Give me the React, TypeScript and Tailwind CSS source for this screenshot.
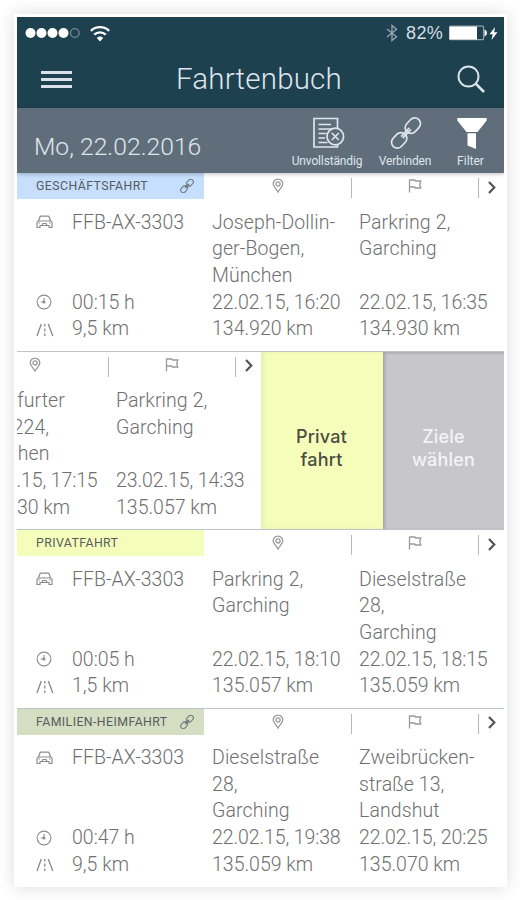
import clsx from "clsx";

type Trip = {
  tag: string;
  tagClass: string;
  linked?: boolean;
  plate: string;
  duration: string;
  distance: string;
  from: string[];
  fromTime: string;
  fromKm: string;
  to: string[];
  toTime: string;
  toKm: string;
  swiped?: boolean;
};

const trips: Trip[] = [
  {
    tag: "GESCHÄFTSFAHRT",
    tagClass: "bg-[#c5dffc]",
    linked: true,
    plate: "FFB-AX-3303",
    duration: "00:15 h",
    distance: "9,5 km",
    from: ["Joseph-Dollin-", "ger-Bogen,", "München"],
    fromTime: "22.02.15, 16:20",
    fromKm: "134.920 km",
    to: ["Parkring 2,", "Garching"],
    toTime: "22.02.15, 16:35",
    toKm: "134.930 km",
  },
  {
    tag: "",
    tagClass: "bg-white",
    plate: "",
    duration: "",
    distance: "",
    from: ["Frankfurter", "Ring 224,", "München"],
    fromTime: "22.02.15, 17:15",
    fromKm: "134.930 km",
    to: ["Parkring 2,", "Garching"],
    toTime: "23.02.15, 14:33",
    toKm: "135.057 km",
    swiped: true,
  },
  {
    tag: "PRIVATFAHRT",
    tagClass: "bg-[#f5fdba]",
    plate: "FFB-AX-3303",
    duration: "00:05 h",
    distance: "1,5 km",
    from: ["Parkring 2,", "Garching"],
    fromTime: "22.02.15, 18:10",
    fromKm: "135.057 km",
    to: ["Dieselstraße", "28,", "Garching"],
    toTime: "22.02.15, 18:15",
    toKm: "135.059 km",
  },
  {
    tag: "FAMILIEN-HEIMFAHRT",
    tagClass: "bg-[#d5dec3]",
    linked: true,
    plate: "FFB-AX-3303",
    duration: "00:47 h",
    distance: "9,5 km",
    from: ["Dieselstraße", "28,", "Garching"],
    fromTime: "22.02.15, 19:38",
    fromKm: "135.059 km",
    to: ["Zweibrücken-", "straße 13,", "Landshut"],
    toTime: "22.02.15, 20:25",
    toKm: "135.070 km",
  },
];

const LinkIcon = ({ className }: { className?: string }) => (
  <svg viewBox="0 0 32 32" fill="none" stroke="currentColor" className={className}>
    <g transform="rotate(-47 16 16)">
      <rect x="-2.5" y="10.2" width="17" height="11.6" rx="5.8" />
      <rect x="17.5" y="10.2" width="17" height="11.6" rx="5.8" />
      <path d="M10 14.900h12M10 17.100h12" />
    </g>
  </svg>
);

const PinIcon = () => (
  <svg width="12" height="16" viewBox="0 0 12 16" fill="none" stroke="#999" strokeWidth="1.3">
    <path d="M6 14C4.800 11.300 1.200 8.700 1.200 5.900a4.800 4.800 0 0 1 9.600 0c0 2.800-3.600 5.400-4.800 8.100z" />
    <circle cx="6" cy="5.900" r="2.100" />
  </svg>
);

const FlagIcon = () => (
  <svg width="14" height="15" viewBox="0 0 14 15" fill="none" stroke="#999" strokeWidth="1.3">
    <path d="M1.500 14.500V1.500M1.500 2h5.300l.8 1h5.200l-1.100 3.500 1.100 3.500H7.300l-.8-1h-5" />
  </svg>
);

const CarIcon = () => (
  <svg width="17" height="14" viewBox="0 0 17 14" fill="none" stroke="#8c8c8c" strokeWidth="1.2">
    <path d="M2.500 6 4 1.800Q4.200 1.100 5 1.100h7q.8 0 1 .7L14.500 6M2.500 6h12q1.500.3 1.500 2v4.500h-3v-2H4v2H1V8Q1 6.300 2.500 6zM6 10.500 6.800 8.500h3.400l.8 2M2.500 8h1.500M13 8h1.500" />
  </svg>
);

const ClockIcon = () => (
  <svg width="16" height="16" viewBox="0 0 16 16" fill="none" stroke="#8c8c8c" strokeWidth="1.1">
    <circle cx="8" cy="8" r="6.900" />
    <path d="M8 4v4H4.800" />
    <circle cx="8" cy="8" r="1" fill="#8c8c8c" />
  </svg>
);

const RoadIcon = () => (
  <svg width="18" height="14" viewBox="0 0 18 14" fill="none" stroke="#888" strokeWidth="1.3">
    <path d="M5.300 1 1 13M12.300 1l4.500 12" />
    <path d="M8.800 1v2.500M8.800 5.500v3M8.800 10.500V13" />
  </svg>
);

const StatusBar = () => (
  <div className="flex h-8 items-center justify-between pl-[8px] pr-[6px] text-white">
    <div className="flex items-center">
      <svg width="56" height="12" viewBox="0 0 56 12" fill="currentColor">
        <circle cx="5.500" cy="6" r="5" />
        <circle cx="16.500" cy="6" r="5" />
        <circle cx="27.500" cy="6" r="5" />
        <circle cx="38.500" cy="6" r="5" />
        <circle cx="49.800" cy="6" r="4.300" fill="none" stroke="#71899a" strokeWidth="1.300" />
      </svg>
      <svg width="20" height="17" viewBox="0 0 20 17" fill="none" stroke="currentColor" strokeWidth="2.400" className="ml-[9px]">
        <path d="M.9 5.800a13.200 13.200 0 0 1 18.200 0" />
        <path d="M4.200 9.700a8.400 8.400 0 0 1 11.600 0" />
        <path d="M10 16.500 6.800 13a4.700 4.700 0 0 1 6.400 0z" fill="currentColor" stroke="none" />
      </svg>
    </div>
    <div className="flex items-center">
      <svg width="12" height="18" viewBox="0 0 12 18" fill="none" stroke="#8fa3b0" strokeWidth="1.400">
        <path d="M1 5l9.500 7.800L6 16.500v-15l4.500 3.700L1 13" />
      </svg>
      <span className="ml-[8px] w-[39px] whitespace-nowrap font-['Liberation_Sans'] text-[18px] leading-none tracking-[0.4px] text-[#d5dde2]">82%</span>
      <svg width="40" height="16" viewBox="0 0 40 16" className="ml-[3px]">
        <rect x="1.600" y="1.200" width="34" height="13.500" rx="1" fill="none" stroke="#8fa3ad" strokeWidth="1.200" />
        <rect x="1.500" y="1.500" width="27.500" height="13" fill="#fff" />
        <path d="M36.500 4.500q2.500.8 2.500 3.500t-2.500 3.500z" fill="#fff" />
      </svg>
      <svg width="9" height="13" viewBox="0 0 9 13" fill="#fff" className="ml-[1px]">
        <path d="M6 0 .5 7.200h3.200L2.500 13 8.500 5.300H5.200z" />
      </svg>
    </div>
  </div>
);

const AppBar = () => (
  <div className="flex h-[59px] items-center pl-6 pr-[19px]">
    <div className="mt-px flex w-[31px] flex-col gap-1">
      <span className="h-[3px] bg-[#dbe1ea]" />
      <span className="h-[3px] bg-[#dbe1ea]" />
      <span className="h-[3px] bg-[#dbe1ea]" />
    </div>
    <h1 className="ml-[104px] mt-[2px] flex-1 whitespace-nowrap text-[29.5px] font-light leading-none tracking-[0.2px] text-[#dfe5ec]">
      Fahrtenbuch
    </h1>
    <svg width="28" height="28" viewBox="0 0 28 28" fill="none" stroke="#dfe5ec" strokeWidth="1.900">
      <circle cx="11.500" cy="11.500" r="10" />
      <path d="m18.700 18.700 8.300 8.300" strokeWidth="2.600" />
    </svg>
  </div>
);

const Toolbar = () => (
  <div className="relative z-10 flex h-[65px] bg-[#606e7b] pl-[17px] text-[#dfe5ec] shadow-[0_1px_4px_rgba(0,0,0,0.25)]">
    <div className="w-[253px] whitespace-nowrap pt-[25px] text-[24.7px] font-light leading-[28px]">Mo, 22.02.2016</div>
    <div className="flex w-[80px] flex-col items-center">
      <svg width="33" height="32" viewBox="0 0 33 32" fill="none" stroke="currentColor" strokeWidth="1.700" className="ml-[2px] mt-[9px]">
        <path d="M25.500 11V1.500H2v28.500h23.500v-2" />
        <path d="M6.500 7.500h12.500M6.500 12h14M6.500 16.500h8M6.500 21h6.500M6.500 25.500h9" strokeWidth="1.500" />
        <circle cx="23.300" cy="19.500" r="8.300" />
        <path d="m19.800 16 7 7M26.800 16l-7 7" />
      </svg>
      <span className="mt-[5px] whitespace-nowrap text-[12px] leading-[14px] tracking-[-0.15px]">Unvollständig</span>
    </div>
    <div className="flex w-[76px] flex-col items-center">
      <LinkIcon className="ml-[2px] mt-[9px] h-[32px] w-[32px] stroke-[1.700]" />
      <span className="mt-[5px] text-[12px] leading-[14px] tracking-[-0.15px]">Verbinden</span>
    </div>
    <div className="flex w-[54px] flex-col items-center">
      <svg width="30" height="32" viewBox="0 0 30 32" fill="#fff" className="ml-[3px] mt-[10px]">
        <path d="M.3 0h29.400v2.500L20.500 14h-11L.3 2.500zM10.500 15.200h8.500V31l-8.500-3.500z" />
      </svg>
      <span className="ml-px mt-[4px] text-[12px] leading-[14px]">Filter</span>
    </div>
  </div>
);

const Place = ({ lines, time, km }: { lines: string[]; time: string; km: string }) => (
  <div className="mt-[10.5px] flex h-[134px] flex-col whitespace-nowrap pl-2">
    <div className="h-[80px] tracking-[0.1px]">
      {lines.map((line) => (
        <div key={line}>{line}</div>
      ))}
    </div>
    <div className="tracking-[-0.1px]">{time}</div>
    <div>{km}</div>
  </div>
);

const TripContent = ({ trip }: { trip: Trip }) => (
  <div
    className={clsx(
      "grid w-[487px] shrink-0 grid-cols-[187px_147px_127px_26px] grid-rows-[26px_auto] content-start",
      trip.swiped && "-ml-[243px]"
    )}
  >
    <div className={clsx("flex items-center justify-between pl-[19px] pr-[10px]", trip.tagClass)}>
      <span className="mt-px whitespace-nowrap text-[12.3px] font-normal leading-none tracking-[0.43px] text-[#555c60]">{trip.tag}</span>
      {trip.linked && <LinkIcon className="h-[14px] w-[14px] stroke-[2.500] text-[#707a80]" />}
    </div>
    <div className="flex justify-center pt-[5px]">
      <PinIcon />
    </div>
    <div className="mt-[5px] flex h-5 justify-center border-l border-[#b8b8b8]">
      <FlagIcon />
    </div>
    <div className="mt-[5px] flex h-5 items-center justify-center border-l border-[#b8b8b8] pb-[2px]">
      <svg width="8" height="13" viewBox="0 0 8 13" fill="none" stroke="#555" strokeWidth="2.200">
        <path d="m1 1 5.300 5.500L1 12" />
      </svg>
    </div>
    <div className="mt-[10.5px] flex h-[134px] flex-col pl-[19px]">
      {trip.plate && (
        <>
          <div className="flex h-[80px] items-start">
            <span className="flex h-[25px] w-9 items-center"><CarIcon /></span>
            {trip.plate}
          </div>
          <div className="flex">
            <span className="flex w-9 items-center pb-px"><ClockIcon /></span>
            {trip.duration}
          </div>
          <div className="flex">
            <span className="flex w-9 items-center"><RoadIcon /></span>
            {trip.distance}
          </div>
        </>
      )}
    </div>
    <Place lines={trip.from} time={trip.fromTime} km={trip.fromKm} />
    <Place lines={trip.to} time={trip.toTime} km={trip.toKm} />
  </div>
);

const TripRow = ({ trip, first }: { trip: Trip; first: boolean }) => (
  <div
    className={clsx(
      "flex overflow-hidden text-[19.5px] font-light leading-[26.7px] text-[#6f6f6f]",
      first ? "h-[177.5px]" : "h-[178.5px] border-t border-[#bcc5ca]"
    )}
  >
    <TripContent trip={trip} />
    {trip.swiped && (
      <>
        <button className="w-[122px] shrink-0 bg-[#f5fdba] pb-2 pr-px pt-[23px] font-['Inter'] text-[18px] font-medium leading-[23px] tracking-[0.2px] text-[#4b4d42] shadow-[inset_3px_0_4px_rgba(0,0,0,0.06)]">
          Privat
          <br />
          fahrt
        </button>
        <button className="w-[121px] shrink-0 bg-[#c7c6cb] pb-2 pt-[23px] font-['Inter'] text-[18px] font-medium leading-[23px] tracking-[0.2px] text-[#f4f4f6] shadow-[inset_2px_1px_3px_rgba(0,0,0,0.18)]">
          Ziele
          <br />
          wählen
        </button>
      </>
    )}
  </div>
);

export default function App() {
  return (
    <div className="h-[900px] w-[520px] overflow-hidden bg-white pl-[14px] pt-[14px] font-['Roboto',sans-serif]">
      <div className="h-[873px] w-[493px] overflow-hidden border-[3px] border-white bg-white shadow-[0_0_16px_rgba(0,0,0,0.14)]">
        <header className="bg-[#1e4150]">
          <StatusBar />
          <AppBar />
        </header>
        <Toolbar />
        <main>
          {trips.map((trip, i) => (
            <TripRow key={i} trip={trip} first={i === 0} />
          ))}
        </main>
      </div>
    </div>
  );
}
